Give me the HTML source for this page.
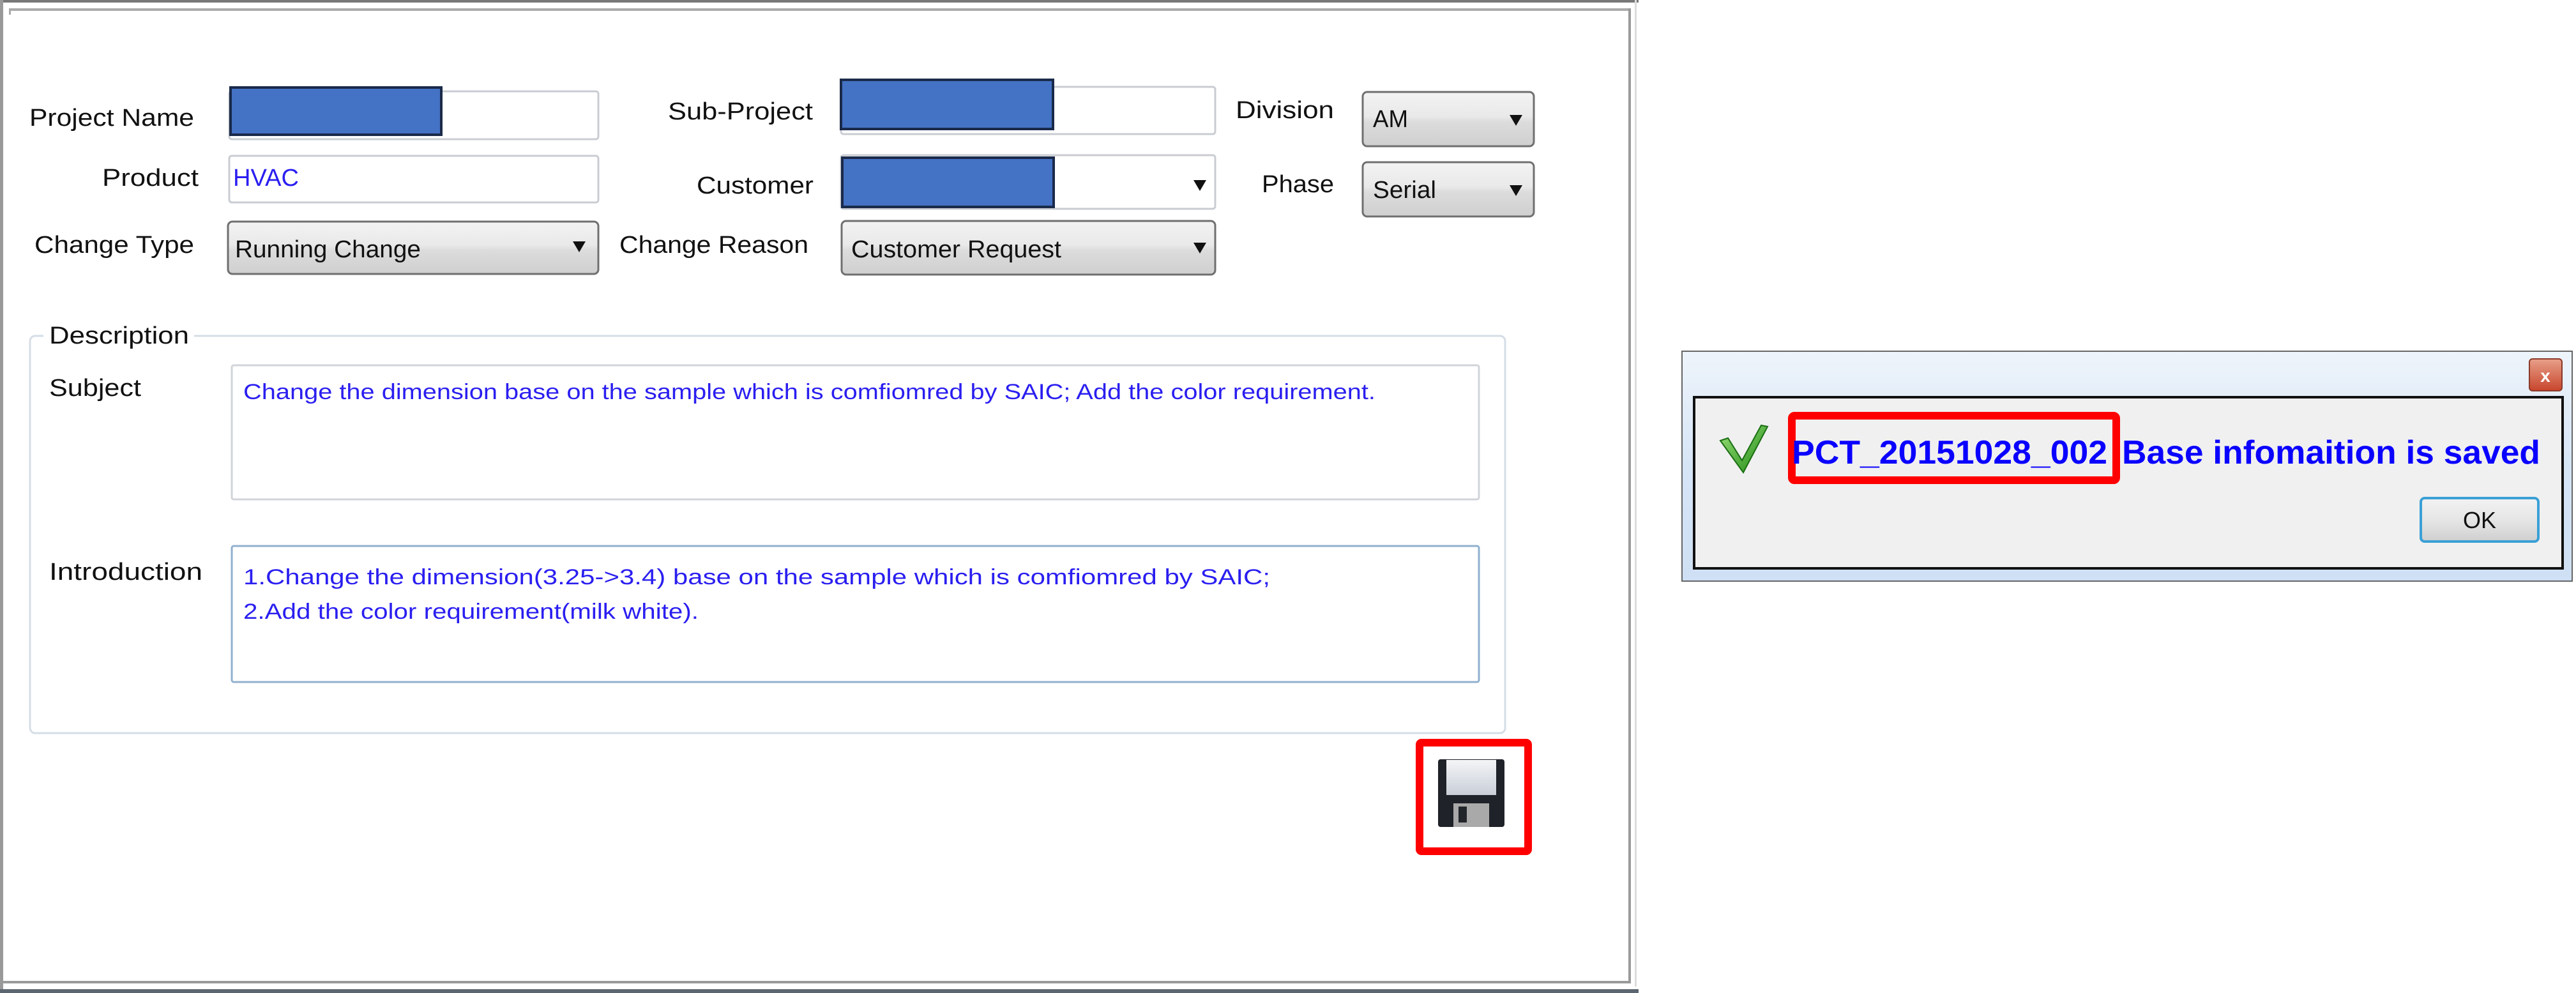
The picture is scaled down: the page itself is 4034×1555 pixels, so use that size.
<!DOCTYPE html>
<html><head><meta charset="utf-8"><style>
html,body{margin:0;padding:0;background:#fff;width:4034px;height:1555px;overflow:hidden}
svg{display:block}
text{font-family:"Liberation Sans",sans-serif}
</style></head><body>
<svg width="4034" height="1555" viewBox="0 0 4034 1555" xmlns="http://www.w3.org/2000/svg">
<defs>
<linearGradient id="sel" x1="0" y1="0" x2="0" y2="1"><stop offset="0" stop-color="#f3f3f3"/><stop offset="0.45" stop-color="#e9e9e9"/><stop offset="0.55" stop-color="#dcdcdc"/><stop offset="1" stop-color="#cfcfcf"/></linearGradient>
<linearGradient id="title" x1="0" y1="0" x2="0" y2="1"><stop offset="0" stop-color="#eef4fb"/><stop offset="0.5" stop-color="#d6e5f6"/><stop offset="1" stop-color="#cfe0f4"/></linearGradient>
<linearGradient id="ok" x1="0" y1="0" x2="0" y2="1"><stop offset="0" stop-color="#f2f2f2"/><stop offset="0.5" stop-color="#e6e6e6"/><stop offset="1" stop-color="#cfcfcf"/></linearGradient>
<linearGradient id="close" x1="0" y1="0" x2="0" y2="1"><stop offset="0" stop-color="#e8a08a"/><stop offset="1" stop-color="#c8452c"/></linearGradient>
<linearGradient id="fl" x1="0" y1="0" x2="0" y2="1"><stop offset="0" stop-color="#f4f5f7"/><stop offset="1" stop-color="#c9ced8"/></linearGradient>
<linearGradient id="chk" x1="0" y1="0" x2="1" y2="1"><stop offset="0" stop-color="#9be07a"/><stop offset="1" stop-color="#1e8a14"/></linearGradient>
</defs>
<rect x="0" y="0" width="2566" height="4" fill="#777"/>
<rect x="14" y="13" width="2540" height="4" fill="#aaa"/>
<rect x="0" y="0" width="5" height="1555" fill="#999"/>
<rect x="14" y="13" width="3" height="10" fill="#aaa"/>
<rect x="2550" y="13" width="4" height="1527" fill="#9a9a9a"/>
<rect x="2560" y="0" width="3" height="1545" fill="#ddd"/>
<rect x="0" y="1536" width="2554" height="4" fill="#9a9a9a"/>
<rect x="0" y="1549" width="2566" height="6" fill="#5c6670"/>

<g font-size="38" fill="#111">
<text x="46" y="197" textLength="258" lengthAdjust="spacingAndGlyphs">Project Name</text>
<text x="160" y="291" textLength="151" lengthAdjust="spacingAndGlyphs">Product</text>
<text x="54" y="396" textLength="250" lengthAdjust="spacingAndGlyphs">Change Type</text>
<text x="1046" y="187" textLength="227" lengthAdjust="spacingAndGlyphs">Sub-Project</text>
<text x="1091" y="303" textLength="183" lengthAdjust="spacingAndGlyphs">Customer</text>
<text x="970" y="396" textLength="296" lengthAdjust="spacingAndGlyphs">Change Reason</text>
<text x="1935" y="185" textLength="154" lengthAdjust="spacingAndGlyphs">Division</text>
<text x="1976" y="301" textLength="113" lengthAdjust="spacingAndGlyphs">Phase</text>
</g>

<rect x="359" y="143" width="578" height="75" rx="4" fill="#fff" stroke="#c9ccd2" stroke-width="3"/>
<rect x="361" y="137" width="330" height="74" fill="#4472c4" stroke="#1a2a4a" stroke-width="4"/>
<rect x="359" y="244" width="578" height="73" rx="4" fill="#fff" stroke="#c9ccd2" stroke-width="3"/>
<text x="365" y="291" font-size="38" fill="#2a1ef0" textLength="103" lengthAdjust="spacingAndGlyphs">HVAC</text>
<rect x="357" y="347" width="580" height="82" rx="7" fill="url(#sel)" stroke="#6f6f6f" stroke-width="3"/>
<text x="368" y="403" font-size="38" fill="#111" textLength="291" lengthAdjust="spacingAndGlyphs">Running Change</text>
<path d="M897 378h20l-10 17z" fill="#111"/>

<rect x="1317" y="136" width="586" height="74" rx="4" fill="#fff" stroke="#c9ccd2" stroke-width="3"/>
<rect x="1317" y="125" width="332" height="77" fill="#4472c4" stroke="#1a2a4a" stroke-width="4"/>
<rect x="1317" y="243" width="586" height="84" rx="4" fill="#fff" stroke="#c9ccd2" stroke-width="3"/>
<rect x="1319" y="247" width="331" height="77" fill="#4472c4" stroke="#1a2a4a" stroke-width="4"/>
<path d="M1869 282h20l-10 17z" fill="#111"/>
<rect x="1318" y="346" width="585" height="84" rx="7" fill="url(#sel)" stroke="#6f6f6f" stroke-width="3"/>
<text x="1333" y="403" font-size="38" fill="#111" textLength="329" lengthAdjust="spacingAndGlyphs">Customer Request</text>
<path d="M1869 380h20l-10 17z" fill="#111"/>
<rect x="2134" y="144" width="268" height="85" rx="7" fill="url(#sel)" stroke="#6f6f6f" stroke-width="3"/>
<text x="2150" y="199" font-size="38" fill="#111" textLength="55" lengthAdjust="spacingAndGlyphs">AM</text>
<path d="M2364 180h20l-10 17z" fill="#111"/>
<rect x="2134" y="254" width="268" height="85" rx="7" fill="url(#sel)" stroke="#6f6f6f" stroke-width="3"/>
<text x="2150" y="310" font-size="38" fill="#111" textLength="99" lengthAdjust="spacingAndGlyphs">Serial</text>
<path d="M2364 290h20l-10 17z" fill="#111"/>

<rect x="47" y="526" width="2310" height="622" rx="8" fill="none" stroke="#d5dde6" stroke-width="3"/>
<rect x="68" y="505" width="236" height="40" fill="#fff"/>
<g font-size="38" fill="#111">
<text x="77" y="538" textLength="219" lengthAdjust="spacingAndGlyphs">Description</text>
<text x="77" y="620" textLength="144" lengthAdjust="spacingAndGlyphs">Subject</text>
<text x="77" y="908" textLength="240" lengthAdjust="spacingAndGlyphs">Introduction</text>
</g>
<rect x="363" y="572" width="1953" height="210" rx="3" fill="#fff" stroke="#d0d4d9" stroke-width="3"/>
<text x="381" y="625" font-size="34" fill="#2a1ef0" textLength="1773" lengthAdjust="spacingAndGlyphs">Change the dimension base on the sample which is comfiomred by SAIC; Add the color requirement.</text>
<rect x="363" y="855" width="1953" height="213" rx="3" fill="#fff" stroke="#8fb0cf" stroke-width="3"/>
<text x="381" y="915" font-size="34" fill="#2a1ef0" textLength="1608" lengthAdjust="spacingAndGlyphs">1.Change the dimension(3.25-&gt;3.4) base on the sample which is comfiomred by SAIC;</text>
<text x="381" y="969" font-size="34" fill="#2a1ef0" textLength="713" lengthAdjust="spacingAndGlyphs">2.Add the color requirement(milk white).</text>

<rect x="2223" y="1163" width="170" height="170" rx="3" fill="none" stroke="#ff0000" stroke-width="12"/>
<rect x="2252" y="1189" width="104" height="106" rx="4" fill="#1f2228"/>
<rect x="2265" y="1190" width="78" height="55" fill="url(#fl)"/>
<rect x="2276" y="1258" width="56" height="37" fill="#a9a9a9"/>
<rect x="2284" y="1263" width="13" height="25" fill="#22252a"/>

<rect x="2634" y="550" width="1394" height="360" fill="url(#title)" stroke="#666" stroke-width="2"/>
<rect x="2653" y="622" width="1360" height="268" fill="#f0f0f0" stroke="#111" stroke-width="4"/>
<rect x="3961" y="562" width="51" height="50" rx="5" fill="url(#close)" stroke="#8a3a2a" stroke-width="2"/>
<text x="3986" y="598" font-size="28" font-weight="bold" fill="#fff" text-anchor="middle">x</text>
<path d="M2694 690l12-4 22 35 30-55 10 2-38 72z" fill="url(#chk)" stroke="#1a6e12" stroke-width="2"/>
<rect x="2806" y="651" width="508" height="101" rx="4" fill="none" stroke="#ff0000" stroke-width="12"/>
<text x="2806" y="726" font-size="52" font-weight="bold" fill="#0a00ff" textLength="494" lengthAdjust="spacingAndGlyphs">PCT_20151028_002</text>
<text x="3323" y="726" font-size="52" font-weight="bold" fill="#0a00ff" textLength="655" lengthAdjust="spacingAndGlyphs">Base infomaition is saved</text>
<rect x="3791" y="780" width="184" height="68" rx="6" fill="url(#ok)" stroke="#3aa0d6" stroke-width="4"/>
<text x="3883" y="827" font-size="36" fill="#111" text-anchor="middle">OK</text>
</svg>
</body></html>
